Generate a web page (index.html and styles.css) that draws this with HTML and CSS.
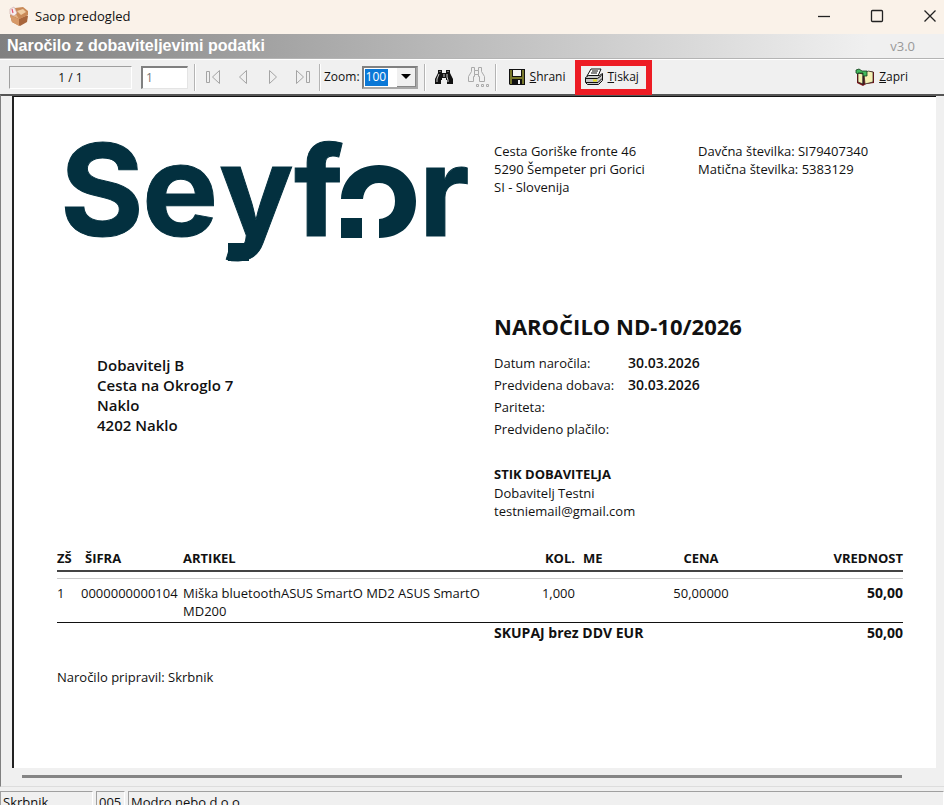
FILE: index.html
```html
<!DOCTYPE html>
<html lang="sl">
<head>
<meta charset="utf-8">
<title>Saop predogled</title>
<link rel="stylesheet" href="styles.css">
</head>
<body>
<div class="window">
  <header class="titlebar">
    <svg class="app-icon" viewBox="0 0 20 20" aria-hidden="true">
      <path d="M1 9l6-4 12 5-1 6-7 4-8-4z" fill="#a8663c"/>
      <path d="M1 9l9 4 9-4-8-5z" fill="#e3b183"/>
      <path d="M6 2l8-1 5 4v4l-9 4-3-5z" fill="#c98a58"/>
      <path d="M8 5l6-2 3 3-5 3z" fill="#efcda3"/>
      <path d="M1 9l9 4v7l-7-4z" fill="#d79a69"/>
      <path d="M1 3l4-2 3 6-3 3-4-2z" fill="#f7eeee" stroke="#c9a5a5" stroke-width=".6"/>
      <path d="M3 3l1 4" stroke="#e0526b" stroke-width="1.2"/>
    </svg>
    <span class="app-name">Saop predogled</span>
    <div class="window-controls">
      <button type="button" aria-label="Pomanjšaj"><svg viewBox="0 0 14 14"><path d="M1 7.500h12"/></svg></button>
      <button type="button" aria-label="Povečaj"><svg viewBox="0 0 14 14"><rect x="1.500" y="1.500" width="11" height="11" rx="1"/></svg></button>
      <button type="button" aria-label="Zapri okno"><svg viewBox="0 0 14 14"><path d="M1.500 1.500l11 11M12.500 1.500l-11 11"/></svg></button>
    </div>
  </header>

  <div class="heading">
    <h1>Naročilo z dobaviteljevimi podatki</h1>
    <span class="version">v3.0</span>
  </div>

  <div class="toolbar">
    <output class="page-count">1 / 1</output>
    <input class="page-input" type="text" value="1" aria-label="Stran">
    <span class="sep"></span>
    <div class="nav">
      <button type="button" aria-label="Prva stran"><svg viewBox="0 0 16 16"><path d="M1.500 2.500h3v11h-3zM14.500 1.500v13l-7-6.500z"/></svg></button>
      <button type="button" aria-label="Prejšnja stran"><svg viewBox="0 0 16 16"><path d="M11.500 1.500v13l-7-6.500z"/></svg></button>
      <button type="button" aria-label="Naslednja stran"><svg viewBox="0 0 16 16"><path d="M4.500 1.500v13l7-6.500z"/></svg></button>
      <button type="button" aria-label="Zadnja stran"><svg viewBox="0 0 16 16"><path d="M1.500 1.500v13l7-6.500zM11.500 2.500h3v11h-3z"/></svg></button>
    </div>
    <span class="sep"></span>
    <label class="zoom-label" for="zoom">Zoom:</label>
    <div class="combo">
      <input id="zoom" type="text" value="100">
      <button type="button" aria-label="Izberi povečavo"><svg viewBox="0 0 10 6"><path d="M0 0h10L5 5z"/></svg></button>
    </div>
    <span class="sep"></span>
    <button class="tool find" type="button" aria-label="Najdi">
      <svg viewBox="0 0 20 16"><path d="M4 1h4v3h4V1h4v3l3 6v5h-6v-4h-1V9H8v2H7v4H1v-5l3-6z" fill="#111"/><path d="M5 5L3 10v3M13 5v3l1 3v2M6 2v1M14 2v1M10 5v3" fill="none" stroke="#ccc"/></svg>
    </button>
    <button class="tool find-next" type="button" aria-label="Najdi naprej">
      <svg viewBox="0 0 22 22"><path d="M4.500 1.500h3v3h4v-3h3v4l3 5v5h-5v-5h-1v-2h-4v2h-1v5h-5v-5l3-5zM7.500 4.500v4M11.500 4.500v4M9.500 18.500h2v2h-2zM14.500 18.500h2v2h-2zM19.500 18.500h2v2h-2z" fill="none" stroke="#aaa"/></svg>
    </button>
    <span class="sep"></span>
    <button class="tool save" type="button">
      <svg viewBox="0 0 18 18"><path d="M1 1h16v16H2l-1-1z" fill="#111"/><path d="M2 2h2v7h10V2h2v14h-2v-5H4v5H2z" fill="#77772c"/><path d="M5 2h8v6H5z" fill="#f4f4f4"/><path d="M6 12h7v4H6z" fill="#111"/><path d="M10 12h2v4h-2z" fill="#eee"/></svg>
      <span><u>S</u>hrani</span>
    </button>
    <button class="tool print" type="button">
      <svg viewBox="0 0 20 18"><path d="M7 1h10l-3 7H3z" fill="#fff" stroke="#111"/><path d="M8 3h6M7 5h6" stroke="#111"/><path d="M1.500 9.500l3-2h11l3-2v7l-4 4h-11l-2-2z" fill="#c8c8c8" stroke="#111"/><path d="M1.500 10.500h12l4-3M2 14.500h12l4-4" fill="none" stroke="#111"/><path d="M9 12.500h4" stroke="#e4dc18" stroke-width="2"/></svg>
      <span><u>T</u>iskaj</span>
    </button>
    <button class="tool close" type="button">
      <svg viewBox="0 0 20 18"><path d="M2 6l5-2 3 2 5-3 4 1v11l-8 1-3 2-6-3z" fill="#7c1017"/><path d="M3 5l5 1v10l-5-2zM9 6l4-3 5 1v10l-8 2z" fill="#f5efb4" stroke="#222" stroke-width=".7"/><path d="M1 5V2l3-1 3 2h5v5H8V5H3v1z" fill="#42b85c" stroke="#123d1b" stroke-width=".8"/><path d="M8 8v9" stroke="#222"/></svg>
      <span><u>Z</u>apri</span>
    </button>
  </div>

  <main class="viewer">
    <article class="paper">
      <section class="letterhead">
        <svg class="logo" viewBox="0 0 404 124" role="img" aria-label="Seyfor">
          <g class="logo-text">
            <text x="-5" y="94">S</text><text x="77" y="94">e</text>
            <g class="logo-narrow"><text x="154" y="93">y</text><text x="229" y="94">f</text><text x="354" y="94">r</text></g>
          </g>
          <path d="M163 101H184V119H163Z M276 57C277 37 292 23 314 23C336 23 351 38 351 59C351 82 336 96 314 96V77C324 76 330 70 330 59C330 48 324 41 314 41C304 41 299 48 298 57ZM276 76h21v20h-21z" fill="#03303f"/>
        </svg>
        <address>Cesta Goriške fronte 46<br>5290 Šempeter pri Gorici<br>SI - Slovenija</address>
        <p class="tax">Davčna številka: SI79407340<br>Matična številka: 5383129</p>
      </section>

      <section class="parties">
        <p class="supplier">Dobavitelj B<br>Cesta na Okroglo 7<br>Naklo<br>4202 Naklo</p>
        <div class="order">
          <h2>NAROČILO ND-10/2026</h2>
          <dl>
            <dt>Datum naročila:</dt><dd>30.03.2026</dd>
            <dt>Predvidena dobava:</dt><dd>30.03.2026</dd>
            <dt>Pariteta:</dt><dd></dd>
            <dt>Predvideno plačilo:</dt><dd></dd>
          </dl>
          <h3>STIK DOBAVITELJA</h3>
          <p class="contact">Dobavitelj Testni<br>testniemail@gmail.com</p>
        </div>
      </section>

      <table class="items">
        <colgroup><col class="c-no"><col class="c-code"><col><col class="c-qty"><col class="c-unit"><col class="c-price"><col class="c-value"></colgroup>
        <thead>
          <tr><th>ZŠ</th><th class="code">ŠIFRA</th><th>ARTIKEL</th><th class="num">KOL.</th><th class="unit">ME</th><th class="mid">CENA</th><th class="num">VREDNOST</th></tr>
        </thead>
        <tbody>
          <tr class="rule"><td colspan="7"></td></tr>
          <tr><td>1</td><td>0000000000104</td><td>Miška bluetoothASUS SmartO MD2 ASUS SmartO MD200</td><td class="num">1,000</td><td></td><td class="mid">50,00000</td><td class="num strong">50,00</td></tr>
        </tbody>
        <tfoot>
          <tr><td colspan="3"></td><td colspan="3">SKUPAJ brez DDV EUR</td><td class="num">50,00</td></tr>
        </tfoot>
      </table>

      <p class="prepared">Naročilo pripravil: Skrbnik</p>
    </article>
    <div class="page-edge"></div>
  </main>

  <footer class="statusbar">
    <span class="user">Skrbnik</span><span class="code">005</span><span class="company">Modro nebo d.o.o.</span>
  </footer>
</div>
</body>
</html>
```
FILE: styles.css
```css
* { box-sizing: border-box; }
body, h1, h2, h3, p, dl, dd { margin: 0; }
body {
  font: 13px/18px "Open Sans", "Noto Sans", sans-serif;
  color: #111;
  background: #f0f0f0;
}
button, input { font: inherit; color: inherit; }
button { padding: 0; border: 0; background: none; }
.window { height: 100vh; overflow: hidden; }

.titlebar {
  display: flex;
  align-items: center;
  height: 34px;
  padding: 0 7px 2px 9px;
  gap: 6px;
  background: #faf2e9;
}
.app-icon { width: 20px; height: 20px; }
.window-controls { display: flex; gap: 39px; margin-left: auto; }
.window-controls svg { display: block; width: 14px; height: 14px; fill: none; stroke: #222; stroke-width: 1.3; }

.heading {
  display: flex;
  align-items: center;
  justify-content: space-between;
  height: 25px;
  padding: 0 29px 0 7px;
  background: linear-gradient(90deg, #808080, #f0f0f0 92%);
  border-bottom: 1px solid #b4b4b4;
}
.heading h1 { font: bold 16px/24px "Liberation Sans", sans-serif; color: #fff; }
.version { color: #999; }

.toolbar {
  display: flex;
  align-items: center;
  height: 35px;
  padding: 0 36px 0 9px;
  border-top: 1px solid #fff;
  font-size: 12px;
}
.page-count {
  width: 123px;
  height: 23px;
  line-height: 22px;
  text-align: center;
  border: 1px solid #a0a0a0;
  border-right-color: #fff;
  border-bottom-color: #fff;
}
.page-input {
  width: 47px;
  height: 23px;
  margin-left: 9px;
  padding: 0 3px;
  color: #777;
  background: #fff;
  border: 2px solid #808080;
  border-right: 1px solid #e4e4e4;
  border-bottom: 1px solid #e4e4e4;
}
.sep { width: 2px; height: 27px; margin: 0 6px; background: #b4b4b4; border-right: 1px solid #fff; }
.nav { display: flex; gap: 14px; margin: 0 2px 0 3px; }
.nav svg { display: block; width: 16px; height: 16px; fill: none; stroke: #a4a4a4; }
.sep + .zoom-label { margin-left: -3px; }
.combo {
  display: flex;
  width: 56px;
  height: 23px;
  margin-left: 2px;
  background: #fff;
  border: 2px solid #808080;
  border-right-color: #a8a8a8;
  border-bottom-color: #a8a8a8;
}
.combo input {
  width: 23px;
  height: 17px;
  margin: 1px;
  padding: 0 1px;
  border: 0;
  color: #fff;
  background: #0a78d7;
}
.combo button { flex: 1; margin-left: 8px; background: #f0f0f0; border-right: 1px solid #888; border-bottom: 1px solid #888; }
.combo button svg { display: block; width: 10px; height: 6px; margin: auto; }
.combo + .sep { margin-right: 4px; }
.tool { display: flex; align-items: center; gap: 4px; }
.tool svg { display: block; }
.find { margin: 0 13px 0 4px; }
.find svg { width: 20px; height: 16px; }
.find-next svg { width: 22px; height: 22px; }
.save { margin-left: 5px; }
.save svg { width: 18px; height: 18px; }
.print { height: 35px; margin-left: 9px; padding: 0 7px 0 3px; border: 6px solid #ed1c24; }
.print svg { width: 20px; height: 18px; }
.close { margin-left: auto; }
.close svg { width: 20px; height: 18px; }

.viewer {
  padding: 0 8px 8px 11px;
  border-top: 2px solid #555;
  border-left: 1px solid #808080;
  border-bottom: 1px solid #ddd;
}
.paper {
  min-height: 672px;
  padding: 45px 33px 0 43px;
  background: #fff;
  border-left: 2px solid #222;
  border-top: 1px solid #111;
}
.letterhead { display: grid; grid-template-columns: 437px 204px 1fr; }
.logo { display: block; width: 404px; height: 124px; margin-left: 8px; overflow: visible; }
.logo-text { font: 700 128px "Inter", sans-serif; fill: #03303f; stroke: #03303f; stroke-width: 1; }
.logo-narrow { font-size: 124px; }
address { font-style: normal; }
.parties { display: grid; grid-template-columns: 397px 1fr; padding: 46px 0 0 40px; }
.supplier { padding-top: 43px; font-size: 15px; line-height: 20px; font-weight: 600; }
.order h2 { font-size: 22px; line-height: 28px; }
.order dl { display: grid; grid-template-columns: 134px 1fr; padding-top: 12px; line-height: 22px; }
.order dd { font-size: 14px; font-weight: 600; }
.order h3 { padding-top: 24px; font-size: 13px; line-height: 20px; }

.items { width: 100%; margin-top: 29px; border-collapse: collapse; table-layout: fixed; }
.items th, .items td { padding: 0; text-align: left; vertical-align: top; }
.items th { height: 22px; border-bottom: 2px solid #444; }
.items .rule td { height: 7px; border-bottom: 1px solid #ccc; }
.items tbody tr:last-child td { padding: 5px 0 2px; border-bottom: 1px solid #111; }
.items tfoot td { padding-top: 1px; font-size: 14px; font-weight: 700; }
.items th.code { padding-left: 4px; }
.items .num { text-align: right; }
.items .mid { text-align: center; }
.items .strong { font-size: 14px; font-weight: 700; }
.items th.unit { padding-left: 8px; }
.c-no { width: 24px; }
.c-code { width: 102px; }
.c-qty { width: 81px; }
.c-unit { width: 55px; }
.c-price { width: 142px; }
.c-value { width: 131px; }
.prepared { margin-top: 26px; }
.page-edge { height: 3px; margin: 7px 34px 0 10px; background: #858585; }

.statusbar { display: flex; gap: 3px; margin-top: 4px; font-size: 13px; line-height: 20px; }
.statusbar span { padding: 0 2px; border: 1px solid #a0a0a0; border-right-color: #fff; }
.statusbar .user { width: 93px; }
.statusbar .code { width: 29px; }
.statusbar .company { flex: 1; }
```
